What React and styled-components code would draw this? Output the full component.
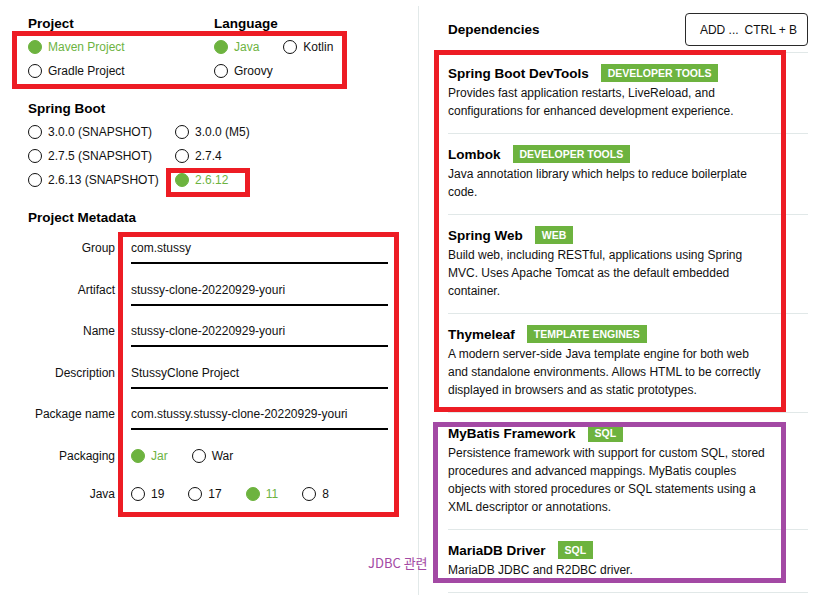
import React from "react"
import styled, { createGlobalStyle } from "styled-components"

const GREEN = "#6db33f"

const GlobalStyle = createGlobalStyle`
  html, body {
    margin: 0;
    padding: 0;
    background: #fff;
  }
  body {
    font-family: "Liberation Sans", Arial, sans-serif;
    color: #111;
  }
  * {
    box-sizing: border-box;
  }
`

const Page = styled.div`
  position: relative;
  width: 836px;
  height: 595px;
  overflow: hidden;
  display: grid;
  grid-template-columns: 419px 1fr;
  padding-top: 6px;
`

const LeftPanel = styled.section`
  border-right: 1px solid #e2e9e9;
  padding: 8px 0 0 28px;
`

const TopGrid = styled.div`
  display: grid;
  grid-template-columns: 186px 140px;
`

const Heading = styled.h2`
  margin: ${(p) => p.$mt || 0}px 0 0;
  font-size: 13.5px;
  line-height: 20px;
  font-weight: 700;
  color: #000;
`

const Options = styled.div`
  display: flex;
  flex-wrap: wrap;
  column-gap: 24px;
  margin-top: 1px;
`

const VersionGrid = styled.div`
  display: grid;
  grid-template-columns: 147px auto;
  margin-top: 1px;
`

const Option = styled.label`
  display: flex;
  align-items: center;
  gap: 6px;
  height: ${(p) => p.$h || 24}px;
  font-size: 12px;
  white-space: nowrap;
  color: ${(p) => (p.$checked ? GREEN : "#111")};
`

const Dot = styled.span`
  width: 14px;
  height: 14px;
  flex: none;
  border-radius: 50%;
  border: 1.5px solid ${(p) => (p.$checked ? GREEN : "#111")};
  background: ${(p) => (p.$checked ? GREEN : "transparent")};
`

const MetaList = styled.div`
  display: flex;
  flex-direction: column;
  gap: 11.5px;
  margin-top: 6px;
`

const MetaRow = styled.div`
  display: grid;
  grid-template-columns: 87px 257px;
  column-gap: 16px;
  align-items: start;
  margin-top: ${(p) => p.$shift || 0}px;
`

const MetaLabel = styled.span`
  text-align: right;
  font-size: 12px;
  line-height: 28px;
  color: #111;
  white-space: nowrap;
`

const Field = styled.input`
  display: block;
  width: 257px;
  height: 30px;
  padding: 0;
  border: none;
  border-bottom: 2px solid #000;
  background: transparent;
  font-family: inherit;
  font-size: 12px;
  color: #111;
  outline: none;
`

const InlineOptions = styled.div`
  display: flex;
  column-gap: 24px;
  height: 30px;
`

const RightPanel = styled.section`
  padding: 7px 28px 0 29px;
`

const Header = styled.div`
  display: flex;
  justify-content: space-between;
  align-items: center;
  height: 33px;
`

const AddButton = styled.button`
  width: 123px;
  height: 33px;
  border: 1px solid #2a2a2a;
  border-radius: 4px;
  background: #fff;
  font-family: inherit;
  font-size: 12px;
  color: #111;
  padding: 0 0 0 4px;
  cursor: pointer;
  span + span {
    margin-left: 6px;
  }
`

const DepList = styled.div`
  margin-top: 6px;
`

const DepItem = styled.div`
  border-top: 1px solid #e1e8e8;
  padding: 10px 0 13px;
  &:last-child {
    border-bottom: 1px solid #e1e8e8;
  }
`

const TitleRow = styled.div`
  display: flex;
  align-items: center;
  gap: 12px;
  height: 20px;
`

const DepName = styled.strong`
  font-size: 13.5px;
  font-weight: 700;
  color: #000;
`

const Badge = styled.span`
  height: 18px;
  line-height: 18px;
  padding: 0 7px;
  background: ${GREEN};
  color: #fff;
  font-size: 10.5px;
  font-weight: 700;
  text-transform: uppercase;
`

const Desc = styled.p`
  margin: 1px 0 0;
  font-size: 12px;
  line-height: 18px;
  color: #111;
  span {
    display: block;
    white-space: nowrap;
  }
`

const Mark = styled.div`
  position: absolute;
  left: ${(p) => p.$x}px;
  top: ${(p) => p.$y}px;
  width: ${(p) => p.$w}px;
  height: ${(p) => p.$h}px;
  border: 5px solid ${(p) => p.$color};
  pointer-events: none;
`

const Note = styled.span`
  position: absolute;
  left: 368px;
  top: 555px;
  font-family: "Noto Sans CJK KR", "Liberation Sans", sans-serif;
  font-size: 13px;
  line-height: 16px;
  color: #a349a4;
`

const Radio = ({ label, checked, h }) => (
  <Option $checked={checked} $h={h}>
    <Dot $checked={checked} />
    {label}
  </Option>
)

const bootVersions = [
  ["3.0.0 (SNAPSHOT)", false],
  ["3.0.0 (M5)", false],
  ["2.7.5 (SNAPSHOT)", false],
  ["2.7.4", false],
  ["2.6.13 (SNAPSHOT)", false],
  ["2.6.12", true],
]

const fields = [
  ["Group", "com.stussy"],
  ["Artifact", "stussy-clone-20220929-youri"],
  ["Name", "stussy-clone-20220929-youri"],
  ["Description", "StussyClone Project"],
  ["Package name", "com.stussy.stussy-clone-20220929-youri"],
]

const deps = [
  {
    name: "Spring Boot DevTools",
    tag: "Developer Tools",
    lines: [
      "Provides fast application restarts, LiveReload, and",
      "configurations for enhanced development experience.",
    ],
  },
  {
    name: "Lombok",
    tag: "Developer Tools",
    lines: ["Java annotation library which helps to reduce boilerplate", "code."],
  },
  {
    name: "Spring Web",
    tag: "Web",
    lines: [
      "Build web, including RESTful, applications using Spring",
      "MVC. Uses Apache Tomcat as the default embedded",
      "container.",
    ],
  },
  {
    name: "Thymeleaf",
    tag: "Template Engines",
    lines: [
      "A modern server-side Java template engine for both web",
      "and standalone environments. Allows HTML to be correctly",
      "displayed in browsers and as static prototypes.",
    ],
  },
  {
    name: "MyBatis Framework",
    tag: "SQL",
    lines: [
      "Persistence framework with support for custom SQL, stored",
      "procedures and advanced mappings. MyBatis couples",
      "objects with stored procedures or SQL statements using a",
      "XML descriptor or annotations.",
    ],
  },
  {
    name: "MariaDB Driver",
    tag: "SQL",
    lines: ["MariaDB JDBC and R2DBC driver."],
  },
]

const marks = [
  { x: 12, y: 31, w: 335, h: 58, color: "#ed1c24" },
  { x: 166, y: 168, w: 84, h: 29, color: "#ed1c24" },
  { x: 118, y: 232, w: 281, h: 285, color: "#ed1c24" },
  { x: 434, y: 50, w: 352, h: 362, color: "#ed1c24" },
  { x: 433, y: 422, w: 353, h: 161, color: "#a349a4" },
]

const App = () => {
  return (
    <>
      <GlobalStyle />
      <Page>
        <LeftPanel>
          <TopGrid>
            <div>
              <Heading>Project</Heading>
              <Options>
                <Radio label="Maven Project" checked />
                <Radio label="Gradle Project" />
              </Options>
            </div>
            <div>
              <Heading>Language</Heading>
              <Options>
                <Radio label="Java" checked />
                <Radio label="Kotlin" />
                <Radio label="Groovy" />
              </Options>
            </div>
          </TopGrid>

          <Heading $mt={16}>Spring Boot</Heading>
          <VersionGrid>
            {bootVersions.map(([v, c]) => (
              <Radio key={v} label={v} checked={c} />
            ))}
          </VersionGrid>

          <Heading $mt={16}>Project Metadata</Heading>
          <MetaList>
            {fields.map(([label, value]) => (
              <MetaRow key={label}>
                <MetaLabel>{label}</MetaLabel>
                <Field defaultValue={value} readOnly />
              </MetaRow>
            ))}
            <MetaRow>
              <MetaLabel>Packaging</MetaLabel>
              <InlineOptions>
                <Radio label="Jar" checked h={28} />
                <Radio label="War" h={28} />
              </InlineOptions>
            </MetaRow>
            <MetaRow $shift={-3}>
              <MetaLabel>Java</MetaLabel>
              <InlineOptions>
                <Radio label="19" h={28} />
                <Radio label="17" h={28} />
                <Radio label="11" checked h={28} />
                <Radio label="8" h={28} />
              </InlineOptions>
            </MetaRow>
          </MetaList>
        </LeftPanel>

        <RightPanel>
          <Header>
            <Heading>Dependencies</Heading>
            <AddButton>
              <span>ADD ...</span>
              <span>CTRL + B</span>
            </AddButton>
          </Header>
          <DepList>
            {deps.map((d) => (
              <DepItem key={d.name}>
                <TitleRow>
                  <DepName>{d.name}</DepName>
                  <Badge>{d.tag}</Badge>
                </TitleRow>
                <Desc>
                  {d.lines.map((l) => (
                    <span key={l}>{l}</span>
                  ))}
                </Desc>
              </DepItem>
            ))}
          </DepList>
        </RightPanel>

        {marks.map((m, i) => (
          <Mark key={i} $x={m.x} $y={m.y} $w={m.w} $h={m.h} $color={m.color} />
        ))}
        <Note>JDBC 관련</Note>
      </Page>
    </>
  )
}

export default App
